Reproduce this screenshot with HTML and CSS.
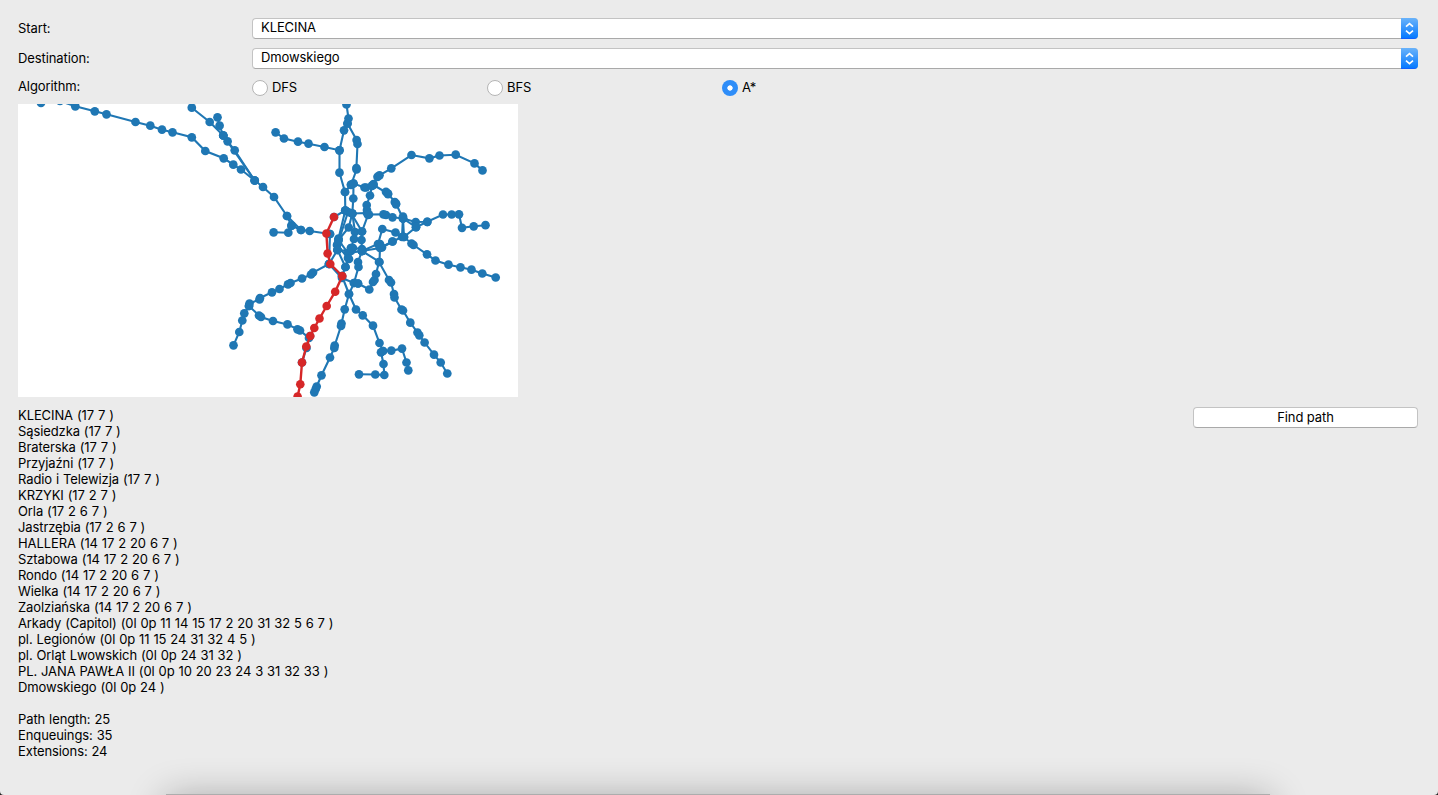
FILE: index.html
```
<!DOCTYPE html>
<html lang="en">
<head>
<meta charset="utf-8">
<title>Path finder</title>
<link rel="stylesheet" href="styles.css">
</head>
<body>
<main class="window">
  <div class="row"><span class="label">Start:</span>
    <div class="combo"><span class="value">KLECINA</span><span class="stepper"><svg width="17" height="21" viewBox="0 0 17 21"><path d="M5 8.7 8.5 5.6 12 8.7M5 12.6 8.5 15.7 12 12.6"/></svg></span></div></div>
  <div class="row"><span class="label">Destination:</span>
    <div class="combo"><span class="value">Dmowskiego</span><span class="stepper"><svg width="17" height="21" viewBox="0 0 17 21"><path d="M5 8.7 8.5 5.6 12 8.7M5 12.6 8.5 15.7 12 12.6"/></svg></span></div></div>
  <div class="row algorithms"><span class="label">Algorithm:</span>
    <div class="option"><i class="radio"></i><span>DFS</span></div>
    <div class="option"><i class="radio"></i><span>BFS</span></div>
    <div class="option"><i class="radio checked"></i><span>A*</span></div></div>
  <svg class="map" width="500" height="293" viewBox="18 104 500 293">
    <defs>
      <marker id="stop" viewBox="-5 -5 10 10" markerWidth="10" markerHeight="10" markerUnits="userSpaceOnUse"><circle r="4.35" fill="#1f77b4"/></marker>
      <marker id="path-stop" viewBox="-5 -5 10 10" markerWidth="10" markerHeight="10" markerUnits="userSpaceOnUse"><circle r="4.3" fill="#d62728"/></marker>
    </defs>
    <g class="network">
      <polyline points="41,103 60,101 75.3,106.3 94.8,111.3 106.5,114.3 135.5,122 150.3,125.7 162,129.7 172.5,132.3 191.8,137.3 205.3,151 223.7,158.3 233.3,164.7 241,169.5 254.7,180.5 263,187 274,197 287,216 291.5,225.7 301,230 309.7,231 330,234"/>
      <polyline points="191.8,107.7 209.7,122 223.3,135.5"/>
      <polyline points="217.5,117.3 219.6,125.7 223.3,135.5 227.6,141.3 234.7,150.3 254.7,180.5"/>
      <polyline points="223.3,135.5 254.7,180.5"/>
      <polyline points="287,216 301,230"/>
      <polyline points="273.6,232.3 288.3,232.7 291.5,225.7"/>
      <polyline points="275.6,132.3 284,138.5 298,141.7 308.5,143.7 324.5,147 339.5,150.3 339.5,172.7 345,192 345.3,210.5 334,217"/>
      <polyline points="346.5,104.5 348.5,118.5 347.5,123.5 344,130.3 339.5,150.3"/>
      <polyline points="347.5,123.5 356.6,140 357.5,144 356.4,168 356.6,169.5 351,185"/>
      <polyline points="345,192 351,184.5 353.5,183.5 364.5,187.5 366,187.5 372,185.5 373.5,184 377.5,176.8 379.5,175.3 391.3,168.3 411.5,155 429.4,158.3 439.5,155.5 455.7,154.7 474.5,163.4 482.5,170.4"/>
      <polyline points="353.5,183.5 353.3,198.5 352.3,213.5 355,232 354,239 351,248"/>
      <polyline points="345.3,210.5 352.3,213.5 367,213 369,214.5 383.5,214.3 386,215 392.5,217.3 403,218.5 415.7,222 427.3,221.8 443,214.5 451.7,214.5 459,214.3 462,227.8 473.7,226.3 485.5,225.2"/>
      <polyline points="373.5,185 388,193.5 396,203.5 403,218.5 404,237 416,227.2 427.3,221.8"/>
      <polyline points="386,191.8 388,194.2"/>
      <polyline points="394.8,202 396,204.3"/>
      <polyline points="403,218.5 416,227.2"/>
      <polyline points="403,216.5 402,237 392.5,241.5 382,247.5 380,244"/>
      <polyline points="372,186 370,195.5 366.7,205 367,210 368,215 362,231.5 361.5,240 362,251"/>
      <polyline points="352.3,213.5 348.7,227.5 338.5,240 337.5,250 329,264"/>
      <polyline points="345.3,210.5 338.5,238.5 337,245 348,258 345.5,267 342,276"/>
      <polyline points="348,212 338,243"/>
      <polyline points="351,213 362,231.5"/>
      <polyline points="337.5,250 351,251 353,248 362,249 362,251 378,244 382.3,229 395.5,232.5 404,237 411.5,243.5 413.5,245 427,254.3 435.5,260.5 448.5,264.7 460.5,267.3 471.5,269.7 482.3,273.5 495.7,277.5"/>
      <polyline points="362,251 380,248 392.5,241.5"/>
      <polyline points="362,251 379.5,262 380,247"/>
      <polyline points="338.5,240 348,253 362,251 358,262 358.5,267 354,283 358,283.5"/>
      <polyline points="337.5,250 345.5,267 349,259 351,248"/>
      <polyline points="329,264 313,272.5 311,274.5 302,278.5 290.5,283 288,284.3 279.5,289 272,292.3 260,298 259.5,299.5 249.5,303.5 249,306 244.3,313.3 242.3,320.5 239.3,332 233.5,345.3"/>
      <polyline points="249,306 259,315.5 261,317 273,321 287.5,324.4 297.5,329.3 300,330.5 309,338 310,336"/>
      <polyline points="330,234 329,264 342,278 354,283 349,294 344.7,309.3 341.5,323.5 341,326 334.7,345.5 334.3,348 330,357.5 321.5,375.3 316.7,386.5 315.7,389 314.3,392.3"/>
      <polyline points="342,276 349,294 356,309.5 362.7,315.3 373,325.7 379.5,343 383,351 381,352.3 383.5,364 384.3,375 375.3,374.5 359,374.3"/>
      <polyline points="383,351 391.3,350.6 402,348.6 406.5,362.5 408.3,370.3"/>
      <polyline points="358,283.5 369.3,289.5 373,282 374.5,280 376,274 379,262 389,280 391,282.5 394,294 394.5,297.5 401.5,309.5 403,310.5 410.3,322.7 417.5,332.5 419.3,335.3 424.6,342.5 434,354.7 440.7,362.5 447.3,373.5"/>
      <polyline points="306.5,348 302,362.5"/>
    </g>
    <polyline class="found" points="334,217 326.4,233.5 327.6,253.5 330.3,264 342.3,276 335.2,291.7 326.7,306 319.5,318.5 314.3,328 310.3,336 306.3,346.5 302,362.5 300.3,384.3 297.6,396.5"/>
  </svg>
  <div class="results">
    <pre class="stops">KLECINA (17 7 )
Sąsiedzka (17 7 )
Braterska (17 7 )
Przyjaźni (17 7 )
Radio i Telewizja (17 7 )
KRZYKI (17 2 7 )
Orla (17 2 6 7 )
Jastrzębia (17 2 6 7 )
HALLERA (14 17 2 20 6 7 )
Sztabowa (14 17 2 20 6 7 )
Rondo (14 17 2 20 6 7 )
Wielka (14 17 2 20 6 7 )
Zaolziańska (14 17 2 20 6 7 )
Arkady (Capitol) (0l 0p 11 14 15 17 2 20 31 32 5 6 7 )
pl. Legionów (0l 0p 11 15 24 31 32 4 5 )
pl. Orląt Lwowskich (0l 0p 24 31 32 )
PL. JANA PAWŁA II (0l 0p 10 20 23 24 3 31 32 33 )
Dmowskiego (0l 0p 24 )

Path length: 25
Enqueuings: 35
Extensions: 24</pre>
    <button class="find">Find path</button>
  </div>
  <div class="dock-shadow"></div>
</main>
</body>
</html>
```
FILE: styles.css
```
* { box-sizing: border-box; }
body { margin: 0; background: #222; }
.window {
  position: relative;
  height: 795px;
  padding: 18px 20px 0 18px;
  overflow: hidden;
  background: #ebebeb;
  border-radius: 0 0 4px 4px;
  font: 13px/16px Inter, "Liberation Sans", sans-serif;
  letter-spacing: -0.1px;
  word-spacing: 0.4px;
  color: #000;
}
.row { display: grid; grid-template-columns: 234px 1fr; height: 21px; margin-bottom: 9px; }
.label { padding-top: 2px; }
.combo {
  display: flex;
  justify-content: space-between;
  height: 21px;
  background: #fff;
  border: 1px solid #c3c3c3;
  border-bottom-color: #a9a9a9;
  border-radius: 4px;
}
.value { padding-left: 8px; }
.stepper {
  width: 17px;
  height: 21px;
  margin: -1px -1px 0 0;
  background: linear-gradient(#6ab3fa, #087aff 94%, #1750ff);
  border-radius: 0 4px 4px 0;
}
.stepper svg { display: block; }
.stepper path { fill: none; stroke: #fff; stroke-width: 1.6; }
.algorithms { grid-template-columns: 234px 235px 235px 1fr; height: 17px; margin-bottom: 0; }
.algorithms .label { padding-top: 0; }
.option { display: flex; gap: 4px; align-items: flex-start; padding-top: 1px; }
.radio {
  width: 16px;
  height: 16px;
  margin-top: 1px;
  background: #fff;
  border: 1px solid #b5b5b5;
  border-radius: 50%;
}
.radio.checked { border: 0; background: radial-gradient(circle, #fff 0 2.3px, #2e8df8 3px); }
.map { display: block; margin-top: 9px; background: #fff; }
.network polyline, .found { fill: none; stroke: #1f77b4; stroke-width: 2.1; marker: url(#stop); }
.found { stroke: #d62728; stroke-width: 2.4; marker: url(#path-stop); }
.results { display: flex; justify-content: space-between; align-items: flex-start; padding-top: 10px; }
.stops { margin: 0; font: inherit; }
.find {
  width: 225px;
  height: 21px;
  padding: 0 0 2px;
  font: inherit;
  letter-spacing: inherit;
  color: #000;
  background: #fff;
  border: 1px solid #c3c3c3;
  border-bottom-color: #a9a9a9;
  border-radius: 4px;
}
.dock-shadow {
  position: absolute;
  left: 166px;
  top: 794px;
  width: 1104px;
  height: 40px;
  background: #adadad;
  box-shadow: 0 4px 38px rgba(0, 0, 0, .32);
}
```
